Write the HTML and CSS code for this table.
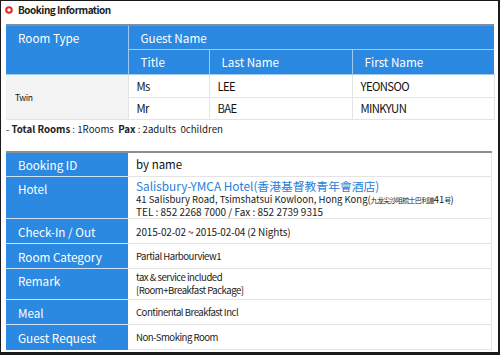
FILE: index.html
```html
<!DOCTYPE html>
<html>
<head>
<meta charset="utf-8">
<link rel="stylesheet" href="styles.css">
</head>
<body>
<div class="frame">
  <div class="title">
    <svg class="dot" width="8" height="8" viewBox="0 0 8 8"><circle cx="4" cy="4" r="2.8" fill="#fff" stroke="#e4261f" stroke-width="2"/></svg>
    <span>Booking Information</span>
  </div>

  <table class="guests">
    <colgroup><col class="c1"><col class="c2"><col class="c3"><col class="c4"></colgroup>
    <thead>
      <tr class="h1"><th rowspan="2" class="rt">Room Type</th><th colspan="3">Guest Name</th></tr>
      <tr class="h2"><th>Title</th><th>Last Name</th><th>First Name</th></tr>
    </thead>
    <tbody>
      <tr class="r1"><td rowspan="2" class="type">Twin</td><td>Ms</td><td>LEE</td><td>YEONSOO</td></tr>
      <tr class="r2"><td>Mr</td><td>BAE</td><td>MINKYUN</td></tr>
    </tbody>
  </table>

  <div class="total">- <b>Total Rooms</b> : 1Rooms&nbsp; <b>Pax</b> : 2adults&nbsp; 0children</div>

  <table class="details">
    <colgroup><col class="lab"><col class="val"></colgroup>
    <tr class="rid"><th>Booking ID</th><td class="big">by name</td></tr>
    <tr class="rhotel"><th>Hotel</th><td class="hotel">
      <div class="hname">Salisbury-YMCA Hotel(香港基督教青年會酒店)</div>
      <div class="small">41 Salisbury Road, Tsimshatsui Kowloon, Hong Kong(<span class="cjk">九龙尖沙咀梳士巴利道</span>41<span class="cjk">号</span>)</div>
      <div class="small tel">TEL : 852 2268 7000 / Fax : 852 2739 9315</div>
    </td></tr>
    <tr class="rn"><th>Check-In / Out</th><td class="date">2015-02-02 ~ 2015-02-04 (2 Nights)</td></tr>
    <tr class="rn"><th>Room Category</th><td>Partial Harbourview1</td></tr>
    <tr class="rremark"><th>Remark</th><td class="remark">tax &amp; service included<br>[Room+Breakfast Package]</td></tr>
    <tr class="rn"><th>Meal</th><td>Continental Breakfast Incl</td></tr>
    <tr class="rn last"><th>Guest Request</th><td>Non-Smoking Room</td></tr>
  </table>
</div>
</body>
</html>
```
FILE: styles.css
```css
* { box-sizing: border-box; }
html, body { margin: 0; padding: 0; background: #fff; }
body { font-family: "Noto Sans CJK KR", "Liberation Sans", sans-serif; color: #111; }
.frame {
  width: 500px; height: 355px;
  border-style: solid; border-color: #1a1a1a;
  border-width: 1px 2px 3px 1px;
  padding: 0 5px 0 5px;
  overflow: hidden;
}
.title {
  height: 23px;
  display: flex; align-items: center; gap: 5px;
  font-size: 10px; font-weight: bold; color: #222;
  letter-spacing: -0.5px;
  padding: 0 0 6px 0;
  margin-left: -1px;
}
.dot { flex: none; }
table { border-collapse: collapse; table-layout: fixed; }
.guests { width: 488px; }
.guests .c1 { width: 122px; }
.guests .c2 { width: 81px; }
.guests .c3 { width: 143px; }
.guests .c4 { width: 142px; }
.guests th {
  background: #2b89e1; color: #fff; font-weight: normal;
  text-align: left; font-size: 11.7px; line-height: 15px;
  padding: 0 0 0 12px;
  border: 1px solid #9fcaf2;
}
.guests thead tr.h1 th { border-top: 2px solid #7f8fa0; height: 24px; }
.guests thead tr.h2 th { height: 25px; }
.guests th.rt { vertical-align: top; padding-top: 4px; border-left: 0; }
.guests tr.h1 th:last-child { border-right: 0; }
.guests tr.h2 th:last-child { border-right: 0; }
.guests td {
  font-size: 11.3px; line-height: 14px; padding: 0 0 0 8px;
  letter-spacing: -0.6px;
  border: 1px solid #e4e4e4; height: 23px;
}
.guests tr.r2 td { height: 22px; }
.guests td.type { background: #f3f3f3; font-size: 8.5px; letter-spacing: -0.4px; padding-left: 9px; border-left: 0; }
.total {
  font-size: 9.7px; line-height: 13px; color: #222;
  padding: 3px 0 0 0; height: 31px;
}
.total b { font-weight: bold; }
.details { width: 486px; }
.details .lab { width: 122px; }
.details th {
  background: #2b89e1; color: #fff; font-weight: normal;
  text-align: left; font-size: 11.7px; line-height: 15px;
  padding: 0 0 0 12px;
  border-bottom: 1px solid #cfe3f7;
  height: 25px;
}
.details tr:first-child th, .details tr:first-child td { border-top: 2px solid #8a8f95; }
.details td {
  font-size: 9.6px; line-height: 13px; color: #222;
  letter-spacing: -0.5px;
  padding: 0 0 0 8px;
  border-bottom: 1px solid #e4e4e4; border-right: 1px solid #e4e4e4;
}
.details td.date { font-size: 10px; letter-spacing: -0.15px; }
.details td.big { font-size: 11.5px; color: #111; letter-spacing: 0; }
.details tr.rhotel th { vertical-align: top; padding-top: 4px; height: 42px; }
.details td.hotel { padding-top: 1px; letter-spacing: 0; }
.hname { font-size: 11.8px; line-height: 15px; color: #2a80d6; }
.small { font-size: 9.5px; line-height: 12px; color: #222; white-space: nowrap; }
.small.tel { font-size: 10px; }
.cjk { font-size: 7px; letter-spacing: -0.7px; }
.details tr.rremark th { vertical-align: top; padding-top: 4px; height: 31px; }
.details td.remark { vertical-align: middle; line-height: 13px; }
.details tr.last th { border-bottom: 0; }
```
